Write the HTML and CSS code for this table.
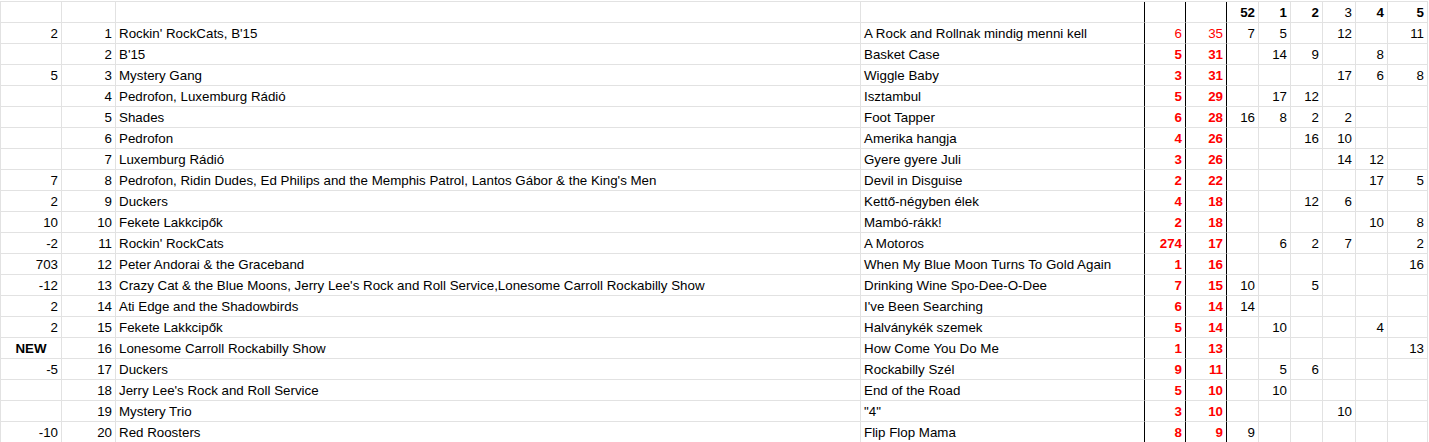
FILE: index.html
```
<!DOCTYPE html>
<html lang="hu">
<head>
  <meta charset="UTF-8">
  <title>Toplista</title>
  <link rel="stylesheet" href="styles.css">
</head>
<body>
  <div class="sheet">
    <div class="row">
      <div class="c"></div><div class="c"></div><div class="c"></div><div class="c edge"></div>
      <div class="c edge"></div><div class="c edge"></div>
      <div class="c num b">52</div><div class="c num b">1</div><div class="c num b">2</div><div class="c num">3</div><div class="c num b">4</div><div class="c num b">5</div>
    </div>
    <div class="row">
      <div class="c num">2</div><div class="c num">1</div><div class="c">Rockin' RockCats, B'15</div><div class="c edge">A Rock and Rollnak mindig menni kell</div>
      <div class="c num red edge">6</div><div class="c num red edge">35</div>
      <div class="c num">7</div><div class="c num">5</div><div class="c num"></div><div class="c num">12</div><div class="c num"></div><div class="c num">11</div>
    </div>
    <div class="row">
      <div class="c num"></div><div class="c num">2</div><div class="c">B'15</div><div class="c edge">Basket Case</div>
      <div class="c num red b edge">5</div><div class="c num red b edge">31</div>
      <div class="c num"></div><div class="c num">14</div><div class="c num">9</div><div class="c num"></div><div class="c num">8</div><div class="c num"></div>
    </div>
    <div class="row">
      <div class="c num">5</div><div class="c num">3</div><div class="c">Mystery Gang</div><div class="c edge">Wiggle Baby</div>
      <div class="c num red b edge">3</div><div class="c num red b edge">31</div>
      <div class="c num"></div><div class="c num"></div><div class="c num"></div><div class="c num">17</div><div class="c num">6</div><div class="c num">8</div>
    </div>
    <div class="row">
      <div class="c num"></div><div class="c num">4</div><div class="c">Pedrofon, Luxemburg Rádió</div><div class="c edge">Isztambul</div>
      <div class="c num red b edge">5</div><div class="c num red b edge">29</div>
      <div class="c num"></div><div class="c num">17</div><div class="c num">12</div><div class="c num"></div><div class="c num"></div><div class="c num"></div>
    </div>
    <div class="row">
      <div class="c num"></div><div class="c num">5</div><div class="c">Shades</div><div class="c edge">Foot Tapper</div>
      <div class="c num red b edge">6</div><div class="c num red b edge">28</div>
      <div class="c num">16</div><div class="c num">8</div><div class="c num">2</div><div class="c num">2</div><div class="c num"></div><div class="c num"></div>
    </div>
    <div class="row">
      <div class="c num"></div><div class="c num">6</div><div class="c">Pedrofon</div><div class="c edge">Amerika hangja</div>
      <div class="c num red b edge">4</div><div class="c num red b edge">26</div>
      <div class="c num"></div><div class="c num"></div><div class="c num">16</div><div class="c num">10</div><div class="c num"></div><div class="c num"></div>
    </div>
    <div class="row">
      <div class="c num"></div><div class="c num">7</div><div class="c">Luxemburg Rádió</div><div class="c edge">Gyere gyere Juli</div>
      <div class="c num red b edge">3</div><div class="c num red b edge">26</div>
      <div class="c num"></div><div class="c num"></div><div class="c num"></div><div class="c num">14</div><div class="c num">12</div><div class="c num"></div>
    </div>
    <div class="row">
      <div class="c num">7</div><div class="c num">8</div><div class="c">Pedrofon, Ridin Dudes, Ed Philips and the Memphis Patrol, Lantos Gábor &amp; the King's Men</div><div class="c edge">Devil in Disguise</div>
      <div class="c num red b edge">2</div><div class="c num red b edge">22</div>
      <div class="c num"></div><div class="c num"></div><div class="c num"></div><div class="c num"></div><div class="c num">17</div><div class="c num">5</div>
    </div>
    <div class="row">
      <div class="c num">2</div><div class="c num">9</div><div class="c">Duckers</div><div class="c edge">Kettő-négyben élek</div>
      <div class="c num red b edge">4</div><div class="c num red b edge">18</div>
      <div class="c num"></div><div class="c num"></div><div class="c num">12</div><div class="c num">6</div><div class="c num"></div><div class="c num"></div>
    </div>
    <div class="row">
      <div class="c num">10</div><div class="c num">10</div><div class="c">Fekete Lakkcipők</div><div class="c edge">Mambó-rákk!</div>
      <div class="c num red b edge">2</div><div class="c num red b edge">18</div>
      <div class="c num"></div><div class="c num"></div><div class="c num"></div><div class="c num"></div><div class="c num">10</div><div class="c num">8</div>
    </div>
    <div class="row">
      <div class="c num">-2</div><div class="c num">11</div><div class="c">Rockin' RockCats</div><div class="c edge">A Motoros</div>
      <div class="c num red b edge">274</div><div class="c num red b edge">17</div>
      <div class="c num"></div><div class="c num">6</div><div class="c num">2</div><div class="c num">7</div><div class="c num"></div><div class="c num">2</div>
    </div>
    <div class="row">
      <div class="c num">703</div><div class="c num">12</div><div class="c">Peter Andorai &amp; the Graceband</div><div class="c edge">When My Blue Moon Turns To Gold Again</div>
      <div class="c num red b edge">1</div><div class="c num red b edge">16</div>
      <div class="c num"></div><div class="c num"></div><div class="c num"></div><div class="c num"></div><div class="c num"></div><div class="c num">16</div>
    </div>
    <div class="row">
      <div class="c num">-12</div><div class="c num">13</div><div class="c">Crazy Cat &amp; the Blue Moons, Jerry Lee's Rock and Roll Service,Lonesome Carroll Rockabilly Show</div><div class="c edge">Drinking Wine Spo-Dee-O-Dee</div>
      <div class="c num red b edge">7</div><div class="c num red b edge">15</div>
      <div class="c num">10</div><div class="c num"></div><div class="c num">5</div><div class="c num"></div><div class="c num"></div><div class="c num"></div>
    </div>
    <div class="row">
      <div class="c num">2</div><div class="c num">14</div><div class="c">Ati Edge and the Shadowbirds</div><div class="c edge">I've Been Searching</div>
      <div class="c num red b edge">6</div><div class="c num red b edge">14</div>
      <div class="c num">14</div><div class="c num"></div><div class="c num"></div><div class="c num"></div><div class="c num"></div><div class="c num"></div>
    </div>
    <div class="row">
      <div class="c num">2</div><div class="c num">15</div><div class="c">Fekete Lakkcipők</div><div class="c edge">Halványkék szemek</div>
      <div class="c num red b edge">5</div><div class="c num red b edge">14</div>
      <div class="c num"></div><div class="c num">10</div><div class="c num"></div><div class="c num"></div><div class="c num">4</div><div class="c num"></div>
    </div>
    <div class="row">
      <div class="c mid b">NEW</div><div class="c num">16</div><div class="c">Lonesome Carroll Rockabilly Show</div><div class="c edge">How Come You Do Me</div>
      <div class="c num red b edge">1</div><div class="c num red b edge">13</div>
      <div class="c num"></div><div class="c num"></div><div class="c num"></div><div class="c num"></div><div class="c num"></div><div class="c num">13</div>
    </div>
    <div class="row">
      <div class="c num">-5</div><div class="c num">17</div><div class="c">Duckers</div><div class="c edge">Rockabilly Szél</div>
      <div class="c num red b edge">9</div><div class="c num red b edge">11</div>
      <div class="c num"></div><div class="c num">5</div><div class="c num">6</div><div class="c num"></div><div class="c num"></div><div class="c num"></div>
    </div>
    <div class="row">
      <div class="c num"></div><div class="c num">18</div><div class="c">Jerry Lee's Rock and Roll Service</div><div class="c edge">End of the Road</div>
      <div class="c num red b edge">5</div><div class="c num red b edge">10</div>
      <div class="c num"></div><div class="c num">10</div><div class="c num"></div><div class="c num"></div><div class="c num"></div><div class="c num"></div>
    </div>
    <div class="row">
      <div class="c num"></div><div class="c num">19</div><div class="c">Mystery Trio</div><div class="c edge">"4"</div>
      <div class="c num red b edge">3</div><div class="c num red b edge">10</div>
      <div class="c num"></div><div class="c num"></div><div class="c num"></div><div class="c num">10</div><div class="c num"></div><div class="c num"></div>
    </div>
    <div class="row">
      <div class="c num">-10</div><div class="c num">20</div><div class="c">Red Roosters</div><div class="c edge">Flip Flop Mama</div>
      <div class="c num red b edge">8</div><div class="c num red b edge">9</div>
      <div class="c num">9</div><div class="c num"></div><div class="c num"></div><div class="c num"></div><div class="c num"></div><div class="c num"></div>
    </div>
  </div>
</body>
</html>
```
FILE: styles.css
```
body {
  margin: 0;
  padding-top: 1px;
  background: #ffffff;
  font-family: "Liberation Sans", Arial, sans-serif;
  font-size: 10pt;
  color: #000;
  overflow: hidden;
}
.sheet {
  width: max-content;
  border-top: 1px solid #e2e2e2;
  border-left: 1px solid #e2e2e2;
}
.row {
  display: grid;
  grid-template-columns: 61px 54px 745px 284px 41px 41px 32px 32px 32px 33px 32px 40px;
}
.c {
  box-sizing: border-box;
  height: 21px;
  padding: 1px 3px 0;
  line-height: 19px;
  border-right: 1px solid #e2e2e2;
  border-bottom: 1px solid #e2e2e2;
  white-space: nowrap;
  overflow: hidden;
}
.c.edge {
  border-right-color: #000;
}
.num {
  text-align: right;
}
.mid {
  text-align: center;
}
.b {
  font-weight: bold;
}
.red {
  color: #ff0000;
}
```
